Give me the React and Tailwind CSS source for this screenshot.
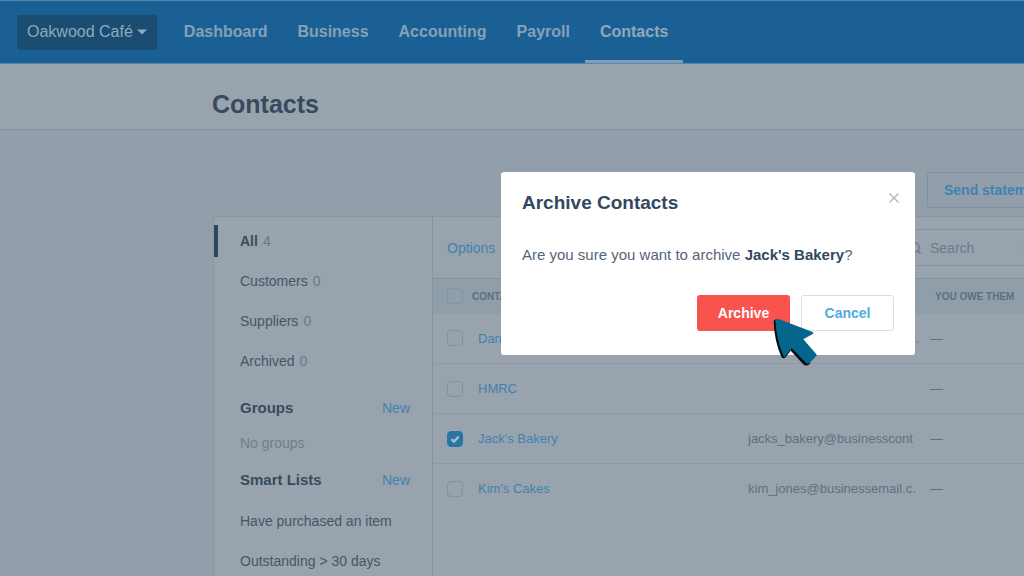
import { useState } from 'react';
import { Search, X } from 'lucide-react';

const navItems = ['Dashboard', 'Business', 'Accounting', 'Payroll', 'Contacts'];

const filters = [
  { name: 'All', count: 4 },
  { name: 'Customers', count: 0 },
  { name: 'Suppliers', count: 0 },
  { name: 'Archived', count: 0 },
];

const smartLists = ['Have purchased an item', 'Outstanding > 30 days'];

const contacts = [
  { id: 1, name: 'Daniel Smith', email: 'daniel_smith@businessmails.' },
  { id: 2, name: 'HMRC', email: '' },
  { id: 3, name: "Jack's Bakery", email: 'jacks_bakery@businesscont' },
  { id: 4, name: "Kim's Cakes", email: 'kim_jones@businessemail.c.' },
];

const Checkbox = ({ label, checked, onChange }) => (
  <span className="relative block w-4 h-4">
    <input
      type="checkbox"
      aria-label={label}
      checked={checked}
      onChange={onChange}
      className="block appearance-none w-4 h-4 rounded border border-[#84919e] checked:bg-[#2a75a6] checked:border-[#2a75a6]"
    />
    {checked && (
      <svg viewBox="0 0 16 16" className="absolute inset-0 w-4 h-4 pointer-events-none" fill="none" stroke="#a9bccb" strokeWidth="2.4">
        <path d="M4.5 8.2l2.4 2.4 4.8-5" />
      </svg>
    )}
  </span>
);

const Header = () => (
  <header className="flex items-stretch shrink-0 h-16 bg-[#1b6094] border-y border-[#5488ad] pl-[17px]">
    <button className="self-center flex items-center gap-1 h-[35px] px-[10px] mr-3 rounded-[3px] bg-[#1b4c72] text-base text-[#8fa9be] whitespace-nowrap">
      Oakwood Café
      <svg viewBox="0 0 10 6" className="w-[10px] h-[6px]" fill="currentColor">
        <path d="M0 0.5h10L5 5.5z" />
      </svg>
    </button>
    <nav className="flex">
      {navItems.map((item) => (
        <a
          key={item}
          href="#"
          className={`flex items-center px-[15px] pt-[3px] text-base font-bold border-b-[3px] ${
            item === 'Contacts' ? 'text-[#8fa8bd] border-[#7f9db5]' : 'text-[#84a1b9] border-transparent'
          }`}
        >
          {item}
        </a>
      ))}
    </nav>
  </header>
);

const Sidebar = () => (
  <aside className="w-[219px] shrink-0 border-r border-[#8794a1] pt-1">
    <ul>
      {filters.map((filter, index) => (
        <li key={filter.name} className="h-10 flex items-center">
          <a
            href="#"
            className={`flex items-center gap-[5px] h-8 pl-[22px] border-l-4 text-sm ${
              index === 0 ? 'border-[#2f465c] font-bold text-[#3a4b5e]' : 'border-transparent text-[#465669]'
            }`}
          >
            {filter.name}
            <span className="font-normal text-[#6a7887]">{filter.count}</span>
          </a>
        </li>
      ))}
    </ul>
    <div className="flex items-center justify-between h-[54px] pl-[26px] pr-[22px]">
      <h2 className="text-[15px] font-bold text-[#384a5e]">Groups</h2>
      <a href="#" className="text-sm text-[#4482b0]">New</a>
    </div>
    <p className="pl-[26px] h-4 text-sm leading-4 text-[#6f7d8b]">No groups</p>
    <div className="flex items-center justify-between h-[58px] pl-[26px] pr-[22px]">
      <h2 className="text-[15px] font-bold text-[#384a5e]">Smart Lists</h2>
      <a href="#" className="text-sm text-[#4482b0]">New</a>
    </div>
    <ul className="pl-[26px]">
      {smartLists.map((list) => (
        <li key={list} className="h-10">
          <a href="#" className="text-sm text-[#465669]">{list}</a>
        </li>
      ))}
    </ul>
  </aside>
);

const ContactsTable = ({ selected, onToggle }) => (
  <table className="w-full table-fixed text-left">
    <thead>
      <tr className="h-[35px] border-t border-[#84919e] bg-[#909eaa] text-[10px] font-bold text-[#5f6e7d]">
        <th className="w-[39px] pl-[14px]">
          <Checkbox label="Select all contacts" checked={false} onChange={() => {}} />
        </th>
        <th className="w-[276px]">CONTACT</th>
        <th className="w-[182px]">EMAIL</th>
        <th className="pl-[5px]">YOU OWE THEM</th>
      </tr>
    </thead>
    <tbody>
      {contacts.map((contact) => (
        <tr key={contact.id} className="h-[50px] border-b border-[#8d99a5] last:border-b-0 text-[13px]">
          <td className="pl-[14px]">
            <Checkbox
              label={`Select ${contact.name}`}
              checked={selected.includes(contact.id)}
              onChange={() => onToggle(contact.id)}
            />
          </td>
          <td className="pl-[6px]">
            <a href="#" className="text-[#3f82b2]">{contact.name}</a>
          </td>
          <td className="text-[#5f6f80] whitespace-nowrap">{contact.email}</td>
          <td className="text-[#5f6f80]">—</td>
        </tr>
      ))}
    </tbody>
  </table>
);

const Pointer = () => (
  <svg viewBox="0 0 132 144" className="absolute left-[76px] top-[23px] w-11 h-12 pointer-events-none">
    <path d="M2 10Q4 3 12 5L56 94 38 118Q30 125 25 116Q4 70 2 10ZM52 90L60 90 112 136 109 139Q99 147 90 138L54 99Z" fill="#050b10" />
    <path d="M7 7Q11 1 19 4L119 42Q123 45 119 48L91 64 129 107Q133 111 129 115L110 135Q105 139 99 135L56 90 38 114Q34 119 31 113Q10 66 7 7Z" fill="#05668d" />
  </svg>
);

const ArchiveDialog = ({ onClose }) => (
  <div className="fixed inset-0 flex items-start justify-center pt-[172px] pl-[392px]">
    <div role="dialog" aria-labelledby="dialog-title" className="w-[414px] shrink-0 rounded-[3px] bg-white px-[21px] pt-[18px] pb-6">
      <div className="flex items-start justify-between">
        <h2 id="dialog-title" className="text-[19px] leading-[26px] font-bold text-[#33485e]">Archive Contacts</h2>
        <button aria-label="Close" onClick={onClose} className="-mr-2 text-[#aab6c1]">
          <X size={16} strokeWidth={2} />
        </button>
      </div>
      <p className="mt-7 text-[15px] leading-[22px] text-[#55657a]">
        Are you sure you want to archive <strong className="text-[#33475c]">Jack's Bakery</strong>?
      </p>
      <div className="flex justify-end gap-[11px] mt-[29px]">
        <div className="relative">
          <button onClick={onClose} className="w-[93px] h-9 rounded-[3px] bg-[#f8534f] text-sm font-bold text-white">
            Archive
          </button>
          <Pointer />
        </div>
        <button onClick={onClose} className="w-[93px] h-9 rounded-[3px] border border-[#d5dfe8] bg-white text-sm font-bold text-[#52a9e0]">
          Cancel
        </button>
      </div>
    </div>
  </div>
);

const App = () => {
  const [selected, setSelected] = useState([3]);
  const [open, setOpen] = useState(true);

  const toggle = (id) => {
    setSelected((prev) => (prev.includes(id) ? prev.filter((item) => item !== id) : [...prev, id]));
  };

  return (
    <div className="h-screen overflow-hidden flex flex-col bg-[#929faa] font-['Liberation_Sans',Arial,sans-serif]">
      <Header />
      <div className="flex items-center shrink-0 h-[66px] pt-4 pl-[212px] bg-[#99a3ad] border-b border-[#8592a0]">
        <h1 className="text-[25px] font-bold text-[#384a5e]">Contacts</h1>
      </div>
      <main className="grow flex flex-col ml-[213px] -mr-[49px] pt-[42px]">
        <div className="flex justify-end">
          <button className="h-9 px-4 rounded-[3px] border border-[#8190a0] text-sm font-bold text-[#3f82b2] whitespace-nowrap">
            Send statements
          </button>
        </div>
        <div className="grow flex mt-2 border-t border-l border-[#8794a1] bg-[#99a3ad]">
          <Sidebar />
          <section className="grow">
            <div className="flex items-center justify-between h-[61px] pl-[14px] pr-4">
              <button className="text-sm text-[#3f82b2]">Options</button>
              <label className="flex items-center h-[37px] w-[158px] pl-2 pr-[26px] rounded-[3px] border border-[#8592a0] text-[#6a7b8d]">
                <Search size={14} strokeWidth={2.5} className="shrink-0" />
                <input
                  type="text"
                  aria-label="Search contacts"
                  placeholder="Search"
                  className="min-w-0 grow ml-2 bg-transparent text-sm placeholder:text-[#6a7b8d] outline-none"
                />
                <X size={10} className="shrink-0 text-[#84919e]" />
              </label>
            </div>
            <ContactsTable selected={selected} onToggle={toggle} />
          </section>
        </div>
      </main>
      {open && <ArchiveDialog onClose={() => setOpen(false)} />}
    </div>
  );
};

export default App;
